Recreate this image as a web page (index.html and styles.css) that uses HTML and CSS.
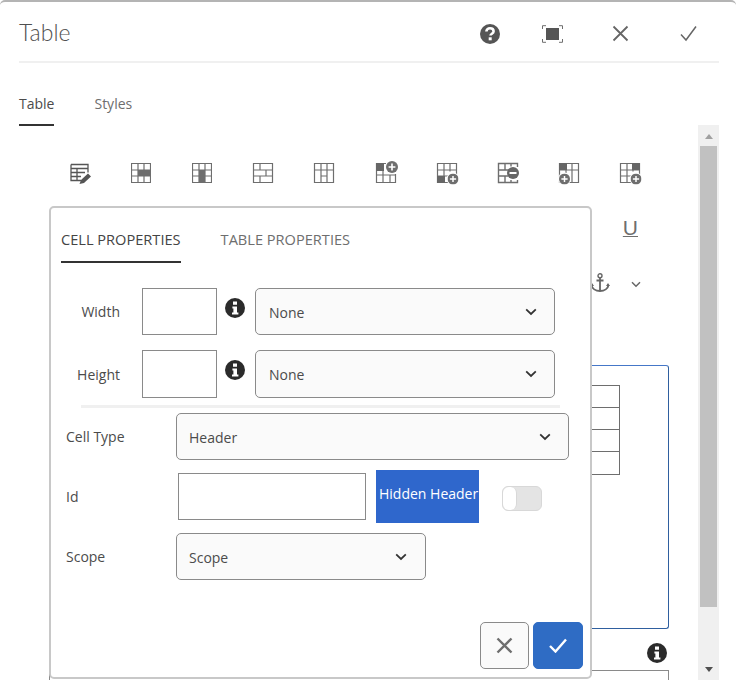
FILE: index.html
```html
<!DOCTYPE html>
<html lang="en">
<head>
<meta charset="utf-8">
<title>Table</title>
<link rel="stylesheet" href="styles.css">
</head>
<body>
<svg class="defs" width="0" height="0" aria-hidden="true">
  <defs>
    <symbol id="grid" viewBox="0 0 20 20">
      <path d="M.5 .5h19v19H.5zM7 .5v19M13 .5v19M.5 7h19M.5 13h19" fill="none" stroke="currentColor" stroke-width="1.2"/>
    </symbol>
    <symbol id="info" viewBox="0 0 20 20">
      <circle cx="10" cy="10" r="10" fill="#2b2b2b"/>
      <path d="M8 3.6h4v3.2H8zM7.4 8.4h4.6v6h1.4v2.2H7v-2.2h1.4v-3.8h-1z" fill="#fff"/>
    </symbol>
    <symbol id="chev" viewBox="0 0 12 8">
      <path d="M1.2 1.4 6 6l4.8-4.6" fill="none" stroke="currentColor" stroke-width="1.8"/>
    </symbol>
    <symbol id="plus" viewBox="0 0 12 12">
      <circle cx="6" cy="6" r="6" fill="currentColor"/>
      <path d="M6 2.6v6.8M2.6 6h6.8" stroke="#fff" stroke-width="1.6"/>
    </symbol>
  </defs>
</svg>

<header class="head">
  <h1 class="title">Table</h1>
  <svg class="hicon help" viewBox="0 0 20 20"><circle cx="10" cy="10" r="10" fill="#555"/><path d="M6.400 7.600c0-2.100 1.500-3.400 3.600-3.400s3.600 1.300 3.600 3c0 2.600-3.100 2.400-3.100 4.400" fill="none" stroke="#fff" stroke-width="2.600"/><rect x="8.700" y="13.300" width="3" height="3" fill="#fff"/></svg>
  <svg class="hicon full" viewBox="0 0 21 18"><path d="M.5 4V.7h3.500M17 .7h3.500V4M.5 14v3.300h3.500M17 17.300h3.500V14" fill="none" stroke="#6e6e6e" stroke-width="1"/><rect x="4" y="3" width="13" height="12" fill="#555"/></svg>
  <svg class="hicon close" viewBox="0 0 17 17"><path d="M1.500 1.500l14 14M15.500 1.500l-14 14" stroke="#666" stroke-width="1.800" fill="none"/></svg>
  <svg class="hicon ok" viewBox="0 0 17 17"><path d="M1 9.500l5 5.500L16 1.500" stroke="#666" stroke-width="1.500" fill="none"/></svg>
</header>

<nav class="tabs">
  <span class="tab active">Table</span>
  <span class="tab">Styles</span>
</nav>

<div class="content">
  <main class="main">
    <div class="toolbar">
      <svg class="tool wide" viewBox="0 0 22 21"><path d="M1 1h17v8M1 1v16h10M1 5h17M1 9h14M1 13h10M7 5v12" fill="none" stroke="#555" stroke-width="1.300"/><path d="M9.500 20.500l1.500-4L18 10l3 3-7 6.500z" fill="#555"/></svg>
      <svg class="tool"><use href="#grid"/><rect x="7" y="7" width="13" height="6" fill="#6e6e6e"/></svg>
      <svg class="tool"><use href="#grid"/><rect x="7" y="7" width="6" height="13" fill="#6e6e6e"/></svg>
      <svg class="tool" viewBox="0 0 20 20"><path d="M.5 .5h19v19H.5zM.5 7h19M.5 13h19M7 .5v6.500M13 7v6M7 13v6.500" fill="none" stroke="currentColor" stroke-width="1.200"/></svg>
      <svg class="tool" viewBox="0 0 20 20"><path d="M.5 .5h19v19H.5zM.5 7h19M7 .5v19M13 .5v19M7 13h6" fill="none" stroke="currentColor" stroke-width="1.200"/></svg>
      <svg class="tool wide shift" viewBox="0 0 22 22"><path d="M.5 .5h19v19H.5zM.5 12h19M7 7v12.500M14 12v7.500" fill="none" stroke="currentColor" stroke-width="1.200"/><rect x="0" y="0" width="8" height="8" fill="#666"/><rect x="10" y="-2" width="12" height="13" fill="#fff"/><use href="#plus" x="10" y="-2" width="12" height="12"/></svg>
      <svg class="tool wide" viewBox="0 0 22 22"><path d="M.5 .5h19v19H.5zM.5 7h19M7 .5v19M13 .5v8M.5 13h12" fill="none" stroke="currentColor" stroke-width="1.200"/><rect x="0" y="13" width="8" height="7" fill="#666"/><circle cx="16" cy="16" r="6.500" fill="#fff"/><use href="#plus" x="10.500" y="10.500" width="11" height="11"/></svg>
      <svg class="tool wide" viewBox="0 0 22 22"><path d="M.5 5V.5h19V4M.5 15v4.500h19V17M.5 5v10M.5 7h12M.5 13h10M7 .5v6M7 13v6.500M13 .5v3M13 17v3" fill="none" stroke="currentColor" stroke-width="1.400"/><circle cx="15" cy="10" r="6" fill="#666"/><path d="M11.500 10h7" stroke="#fff" stroke-width="1.800"/></svg>
      <svg class="tool wide" viewBox="0 0 22 22"><path d="M.5 .5h19v19H.5zM.5 7h19M7 .5v19M13 .5v19M.5 13h8" fill="none" stroke="currentColor" stroke-width="1.200"/><rect x="0" y="0" width="8" height="7" fill="#666"/><circle cx="5.500" cy="16" r="6.500" fill="#fff"/><use href="#plus" x="0" y="10.500" width="11" height="11"/></svg>
      <svg class="tool wide" viewBox="0 0 22 22"><path d="M.5 .5h19v19H.5zM.5 7h19M7 .5v19M13 .5v8M.5 13h12" fill="none" stroke="currentColor" stroke-width="1.200"/><rect x="12" y="0" width="8" height="7" fill="#666"/><circle cx="16" cy="16" r="6.500" fill="#fff"/><use href="#plus" x="10.500" y="10.500" width="11" height="11"/></svg>
    </div>
    <div class="row-u"><span class="underline">U</span></div>
    <div class="row-anchor">
      <svg class="anchor" viewBox="0 0 20 20"><circle cx="10" cy="2.800" r="2" fill="none" stroke="#666" stroke-width="1.400"/><path d="M10 5v13M6.500 7.500h7M1.500 12c.5 3.500 4 6 8.500 6s8-2.500 8.500-6" fill="none" stroke="#666" stroke-width="1.800"/><path d="M0 13l2-3 2 3zM16 13l2-3 2 3z" fill="#666"/></svg>
      <svg class="small-chev"><use href="#chev"/></svg>
    </div>
    <div class="editor">
      <div class="etable">
        <div class="erow"></div>
        <div class="erow"></div>
        <div class="erow"></div>
        <div class="erow"></div>
      </div>
    </div>
    <div class="row-info"><svg class="info"><use href="#info"/></svg></div>
    <div class="lowerbox"></div>
  </main>
  <aside class="scrollbar">
    <span class="arrow up"></span>
    <span class="thumb"></span>
    <span class="arrow down"></span>
  </aside>
</div>

<section class="dialog">
  <div class="dtabs">
    <span class="dtab active">CELL PROPERTIES</span>
    <span class="dtab">TABLE PROPERTIES</span>
  </div>

  <div class="size-row first">
    <label class="size-label">Width</label>
    <input class="input small" type="text" aria-label="Width">
    <svg class="info"><use href="#info"/></svg>
    <div class="select size-select"><span>None</span><svg class="chev"><use href="#chev"/></svg></div>
  </div>
  <div class="size-row second">
    <label class="size-label">Height</label>
    <input class="input small" type="text" aria-label="Height">
    <svg class="info"><use href="#info"/></svg>
    <div class="select size-select"><span>None</span><svg class="chev"><use href="#chev"/></svg></div>
  </div>
  <div class="rule"></div>

  <div class="form-row type-row">
    <label class="form-label">Cell Type</label>
    <div class="select type-select"><span>Header</span><svg class="chev"><use href="#chev"/></svg></div>
  </div>
  <div class="form-row id-row">
    <label class="form-label id-label">Id</label>
    <input class="input id-input" type="text" aria-label="Id">
    <span class="hidden-header"><span class="hh-text">Hidden Header</span></span>
    <span class="toggle"><span class="knob"></span></span>
  </div>
  <div class="form-row scope-row">
    <label class="form-label">Scope</label>
    <div class="select scope-select"><span>Scope</span><svg class="chev"><use href="#chev"/></svg></div>
  </div>

  <div class="actions">
    <button class="btn cancel" type="button" aria-label="Cancel"><svg viewBox="0 0 17 17"><path d="M1.500 1.500l14 14M15.500 1.500l-14 14" stroke="#6e6e6e" stroke-width="2.400" fill="none"/></svg></button>
    <button class="btn confirm" type="button" aria-label="Confirm"><svg viewBox="0 0 18 15"><path d="M1 8l5.500 5.500L17 1.500" stroke="#fff" stroke-width="2.400" fill="none"/></svg></button>
  </div>
</section>
</body>
</html>
```
FILE: styles.css
```css
* { box-sizing: border-box; }
html, body { margin: 0; height: 697px; overflow: hidden; background: #fff; }
body {
  position: relative;
  font-family: "Open Sans", "Liberation Sans", sans-serif;
  font-size: 14px;
  color: #4b4b4b;
  border-top: 2px solid #b4b4b4;
  border-radius: 5px 5px 0 0;
}
.defs { position: absolute; }

/* header */
.head {
  display: flex;
  align-items: center;
  height: 61px;
  margin: 0 17px 0 19px;
  border-bottom: 2px solid #f0f0f0;
}
.title {
  margin: 0 auto 0 0;
  font-family: Lato, "Open Sans", sans-serif;
  font-weight: 300;
  font-size: 23px;
  color: #505050;
}
.hicon { display: block; flex: none; margin-top: 4px; }
.help { width: 20px; height: 20px; }
.full { width: 21px; height: 18px; margin-left: 42px; }
.close { width: 17px; height: 17px; margin-left: 49px; }
.ok { width: 17px; height: 17px; margin-left: 51px; margin-right: 22px; }

/* tabs */
.tabs {
  display: flex;
  gap: 40px;
  margin: 32px 0 0 19px;
  height: 30px;
}
.tab { color: #6e6e6e; line-height: 18px; height: 31px; }
.tab.active { color: #4b4b4b; border-bottom: 2px solid #333; }

/* scrolled content */
.content { display: flex; margin-left: 19px; height: 555px; }
.main { width: 679px; padding-top: 38px; overflow: hidden; }
.toolbar { display: flex; gap: 41px; padding-left: 51px; height: 20px; color: #6e6e6e; }
.tool { display: block; width: 20px; height: 20px; flex: none; overflow: visible; }
.tool.wide { width: 22px; height: 22px; margin-right: -2px; }
.tool.shift { margin-left: 1px; }
.row-u {
  display: flex;
  justify-content: flex-end;
  padding-right: 60px;
  margin-top: 33px;
  height: 23px;
}
.underline {
  font-family: "Liberation Sans", sans-serif;
  font-size: 21px;
  line-height: 23px;
  color: #6e6e6e;
  text-decoration: underline;
  text-decoration-thickness: 1px;
}
.row-anchor {
  display: flex;
  justify-content: flex-end;
  align-items: center;
  height: 20px;
  margin-top: 34px;
  padding-right: 57px;
}
.anchor { width: 20px; height: 20px; display: block; }
.small-chev { width: 10px; height: 7px; margin-left: 21px; margin-top: 2px; color: #666; }
.editor {
  width: 620px;
  height: 264px;
  margin: 72px 0 0 30px;
  border: 1px solid #2f5f9f;
  border-top-color: #4577c8;
  border-radius: 3px;
  padding: 19px 48px 0 20px;
}
.etable { border: 1px solid #6e6e6e; }
.erow { height: 22px; border-bottom: 1px solid #6e6e6e; }
.erow:last-child { border-bottom: 0; }
.row-info { display: flex; justify-content: flex-end; padding-right: 31px; height: 20px; margin-top: 14px; }
.lowerbox {
  width: 620px;
  height: 40px;
  margin: 7px 0 0 30px;
  border: 1px solid #8a8a8a;
  border-bottom: 0;
}
.info { display: block; width: 20px; height: 20px; flex: none; }

/* scrollbar */
.scrollbar {
  width: 21px;
  height: 555px;
  background: #f0f0f0;
  display: flex;
  flex-direction: column;
  align-items: center;
  padding-top: 9px;
}
.arrow { width: 0; height: 0; border-left: 4.500px solid transparent; border-right: 4.500px solid transparent; flex: none; }
.arrow.up { border-bottom: 5px solid #a0a0a0; }
.arrow.down { border-top: 5px solid #505050; margin-top: 60px; }
.thumb { width: 17px; height: 461px; background: #c1c1c1; margin-top: 7px; flex: none; }

/* dialog overlay */
.dialog {
  position: absolute;
  left: 49px;
  top: 204px;
  width: 543px;
  height: 473px;
  background: #fff;
  border: 2px solid #c8c8c8;
  border-radius: 5px;
}
.dtabs {
  display: flex;
  gap: 40px;
  margin: 22px 0 0 10px;
  height: 33px;
}
.dtab { color: #6e6e6e; font-size: 14.6px; line-height: 19px; height: 33px; }
.dtab.active { color: #444; border-bottom: 2px solid #333; }

.size-row { display: flex; align-items: flex-start; }
.size-row.first { margin-top: 25px; height: 47px; }
.size-row.second { margin-top: 15px; height: 48px; }
.size-label { width: 69px; text-align: right; line-height: 19px; margin-top: 14px; flex: none; }
.second .size-label { margin-top: 15px; }
.input {
  display: block;
  border: 1px solid #8a8a8a;
  background: #fff;
  border-radius: 0;
  padding: 0;
  outline: 0;
  flex: none;
}
.input.small { width: 75px; height: 100%; margin-left: 22px; }
.size-row .info { margin: 10px 0 0 8px; }
.select {
  display: flex;
  align-items: center;
  justify-content: space-between;
  border: 1px solid #8a8a8a;
  border-radius: 5px;
  background: #fafafa;
  padding: 1px 17px 0 13px;
  color: #4b4b4b;
  flex: none;
}
.chev { width: 12px; height: 8px; color: #333; display: block; margin-top: -1px; }
.size-select { width: 300px; height: 100%; margin-left: 10px; }

.rule { height: 3px; background: #f0f0f0; width: 479px; margin: 7px 0 0 30px; }

.form-row { display: flex; align-items: center; }
.form-label { flex: none; width: 125px; padding-left: 15px; line-height: 19px; }
.type-row { margin-top: 5px; height: 47px; }
.type-select { width: 393px; height: 47px; padding-left: 12px; }
.id-row { margin-top: 10px; height: 53px; }
.form-label.id-label { width: 127px; }
.id-input { width: 188px; height: 47px; }
.hidden-header {
  display: block;
  width: 103px;
  height: 53px;
  margin-left: 10px;
  background: #2f67cc;
  color: #fff;
  font-weight: 500;
  line-height: 47px;
  padding-left: 3px;
  overflow: hidden;
  white-space: nowrap;
  flex: none;
}
.toggle {
  display: block;
  width: 40px;
  height: 25px;
  margin: 4px 0 0 23px;
  background: #e4e4e4;
  border: 1px solid #d8d8d8;
  border-radius: 6px;
  flex: none;
}
.knob {
  display: block;
  width: 14px;
  height: 100%;
  background: #fff;
  border-right: 1px solid #d8d8d8;
  border-radius: 6px;
}
.scope-row { margin-top: 10px; height: 47px; }
.scope-select { width: 250px; height: 47px; padding-left: 12px; padding-right: 18px; }

.actions {
  position: absolute;
  right: 7px;
  bottom: 8px;
  display: flex;
  gap: 4px;
}
.btn {
  display: flex;
  align-items: center;
  justify-content: center;
  height: 47px;
  padding: 0;
  border-radius: 5px;
}
.btn.cancel { width: 49px; background: #fafafa; border: 1px solid #8a8a8a; }
.btn.cancel svg { width: 17px; height: 17px; }
.btn.confirm { width: 50px; background: #2f6cc4; border: 1px solid #2f6cc4; }
.btn.confirm svg { width: 18px; height: 15px; }
```
